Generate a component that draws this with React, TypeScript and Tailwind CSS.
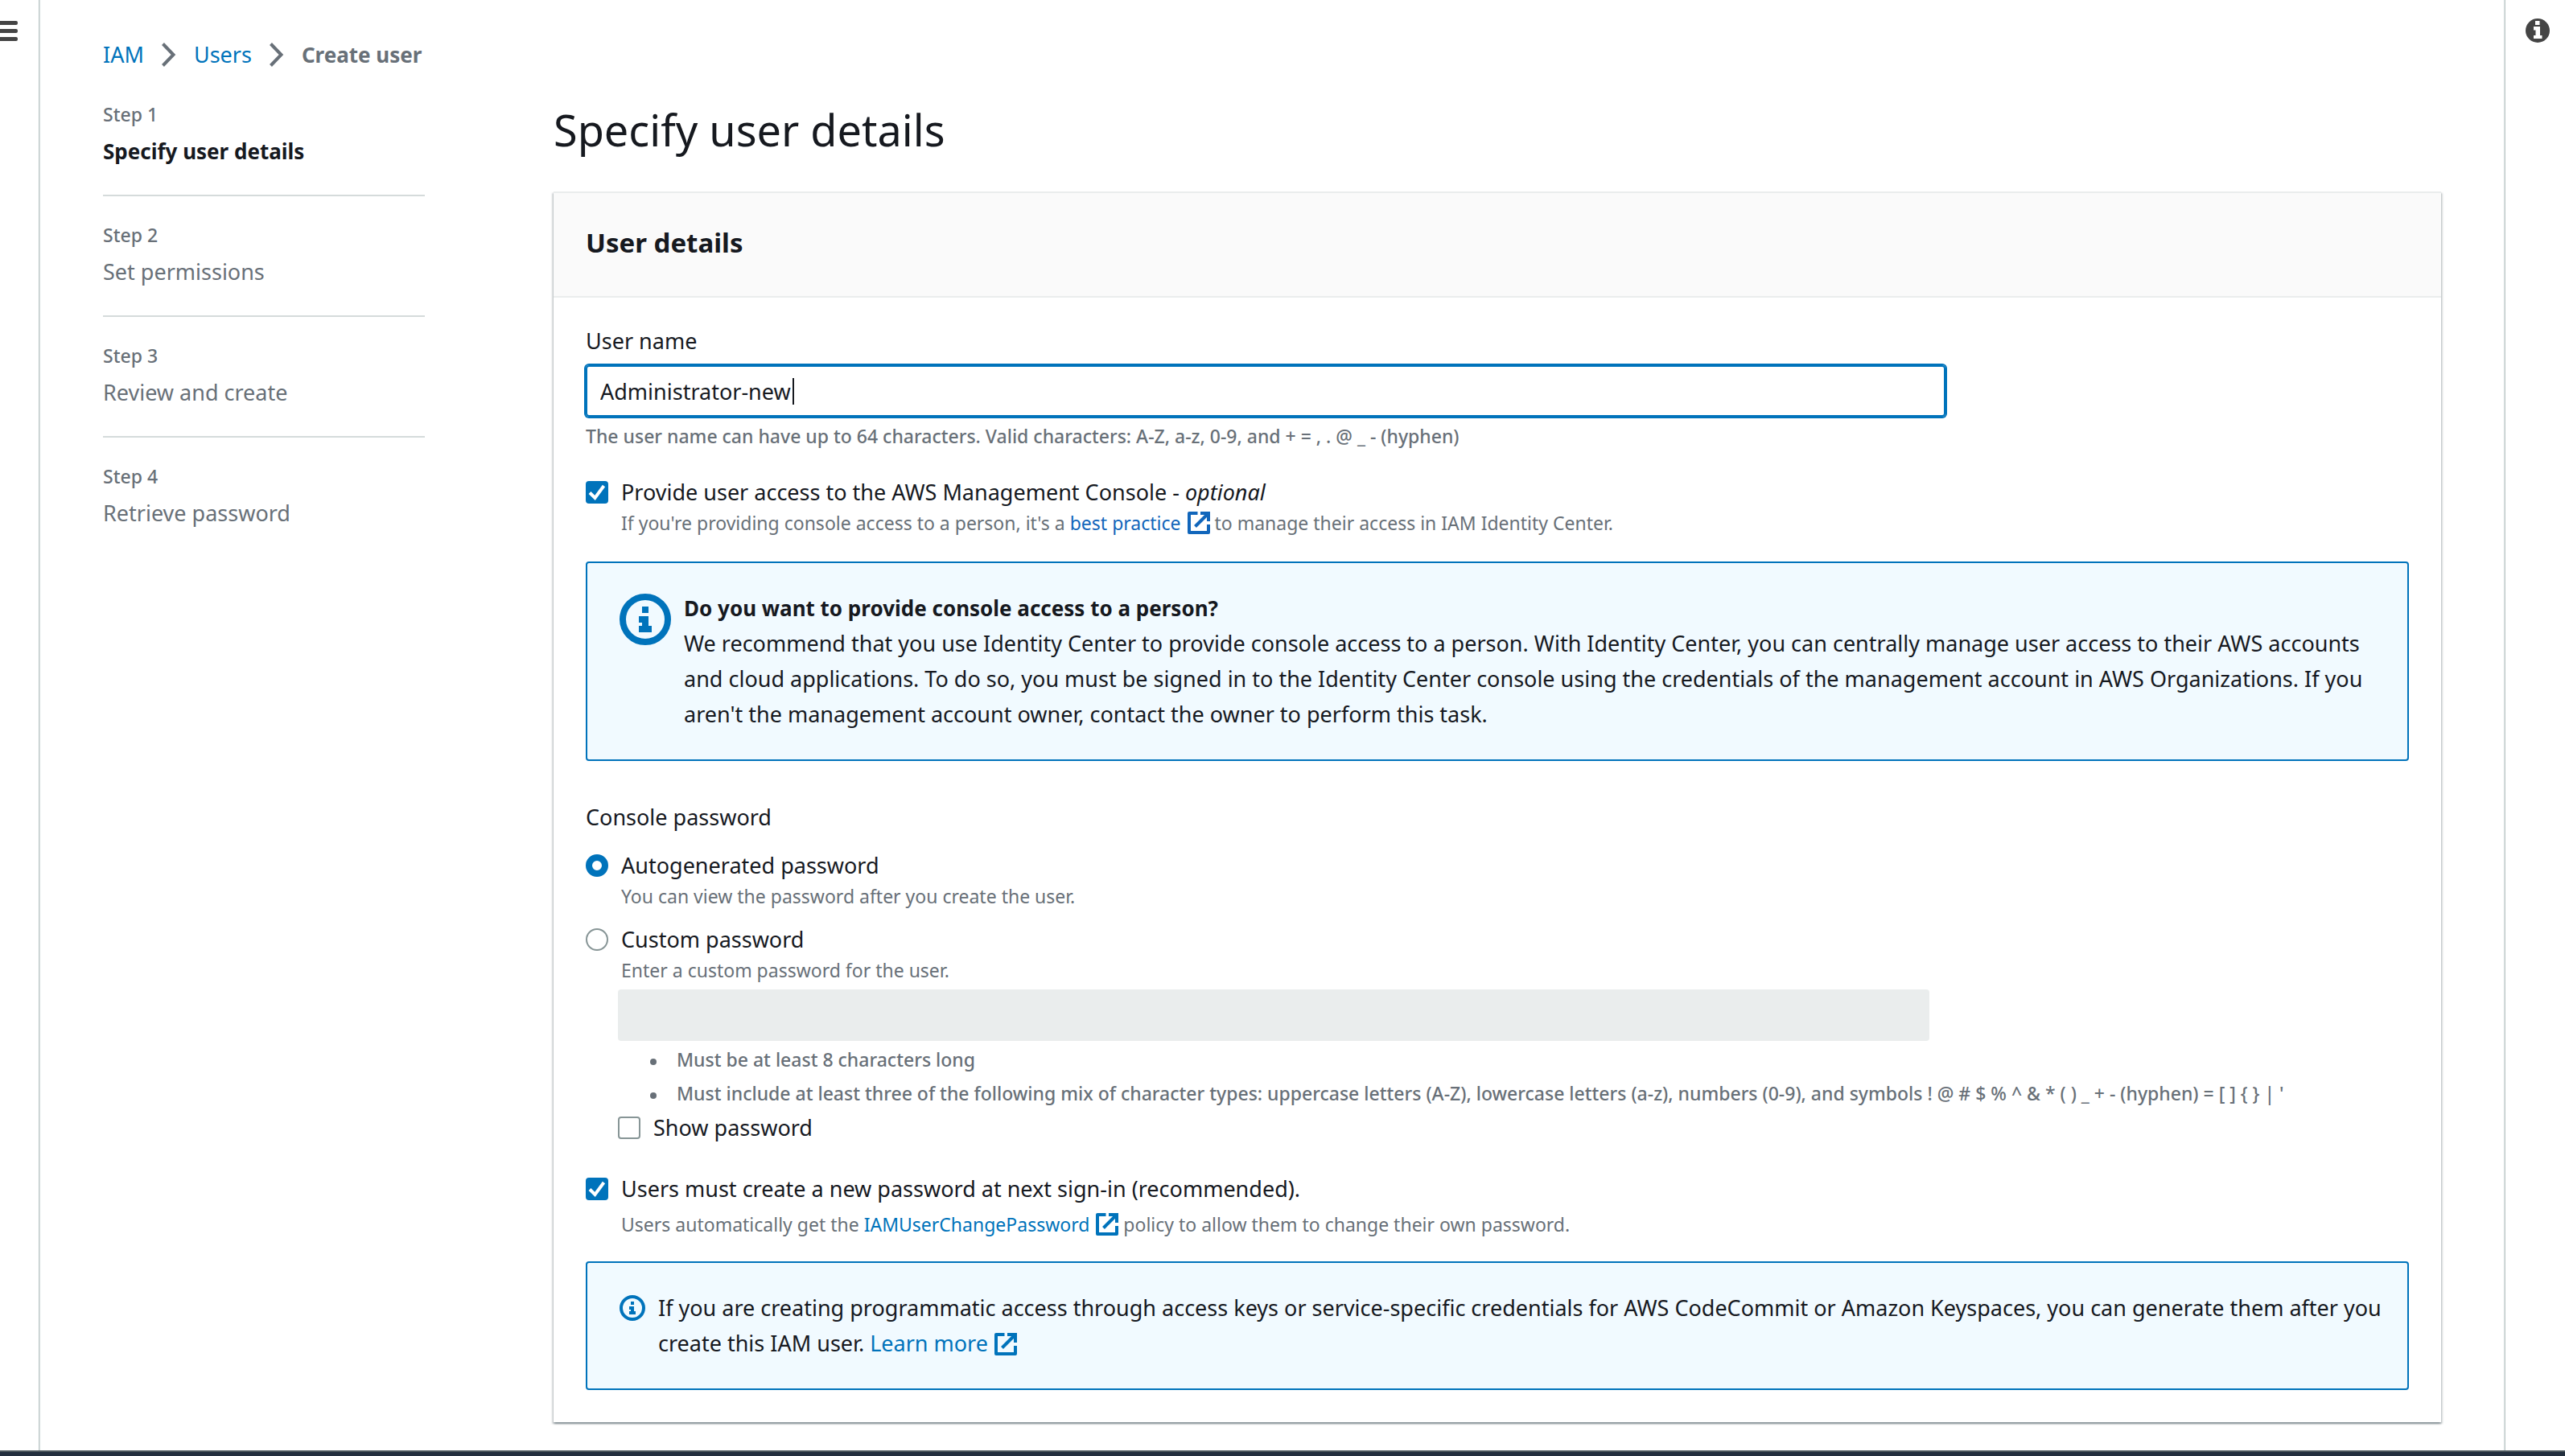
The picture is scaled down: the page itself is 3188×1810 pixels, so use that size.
import type { ReactNode } from 'react';

const steps = [
  { id: 1, title: 'Specify user details', current: true },
  { id: 2, title: 'Set permissions', current: false },
  { id: 3, title: 'Review and create', current: false },
  { id: 4, title: 'Retrieve password', current: false },
];

function Chevron() {
  return (
    <svg className="h-[30px] w-5" viewBox="0 0 20 30" fill="none" stroke="#687078" strokeWidth="4" aria-hidden="true">
      <path d="M2.5 1.5 15.5 15 2.5 28.5" />
    </svg>
  );
}

function ExternalIcon() {
  return (
    <svg className="ml-2 inline-block size-7 align-[-5px]" viewBox="0 0 28 28" fill="none" stroke="currentColor" strokeWidth="4" aria-hidden="true">
      <path d="M12.5 2H2v24h24V16" strokeLinejoin="round" />
      <path d="M16 2h10v10" />
      <path d="M9.5 18.500 25 3" />
    </svg>
  );
}

function ExternalLink({ children, className = 'text-[#0073bb]' }: { children: ReactNode; className?: string }) {
  return (
    <a href="#" className={className}>
      {children}
      <ExternalIcon />
    </a>
  );
}

function InfoIcon({ className }: { className: string }) {
  return (
    <svg className={className} viewBox="0 0 16 16" fill="#0073bb" aria-hidden="true">
      <circle cx="8" cy="8" r="7" fill="none" stroke="#0073bb" strokeWidth="2" />
      <path d="M7 4h2v2H7zM6 7h3v3h1v2H6v-2h1V9H6z" />
    </svg>
  );
}

function Checkbox({ id, checked = false }: { id: string; checked?: boolean }) {
  return (
    <span className="mt-2 grid size-7 shrink-0">
      <input
        id={id}
        type="checkbox"
        defaultChecked={checked}
        className="peer col-start-1 row-start-1 size-7 appearance-none rounded-[4px] border-2 border-[#879596] bg-white checked:border-[#0073bb] checked:bg-[#0073bb]"
      />
      <svg className="pointer-events-none invisible col-start-1 row-start-1 size-7 peer-checked:visible" viewBox="0 0 28 28" fill="none" stroke="#fff" strokeWidth="4" aria-hidden="true">
        <path d="M5 14.500 11.500 21 22.500 6" />
      </svg>
    </span>
  );
}

function Radio({ id, checked = false }: { id: string; checked?: boolean }) {
  return (
    <input
      id={id}
      type="radio"
      name="console-password"
      defaultChecked={checked}
      className="mt-2 size-7 shrink-0 appearance-none rounded-full border-2 border-[#879596] bg-white checked:border-8 checked:border-[#0073bb]"
    />
  );
}

function Hint({ id, children, className = 'leading-8' }: { id?: string; children: ReactNode; className?: string }) {
  return (
    <p id={id} className={`text-[23px] text-[#687078] ${className}`}>
      {children}
    </p>
  );
}

function Alert({ children }: { children: ReactNode }) {
  return (
    <div role="note" className="flex items-start gap-4 rounded-[4px] border-2 border-[#0073bb] bg-[#f1faff] py-[34px] pr-6 pl-10">
      {children}
    </div>
  );
}

export default function App() {
  return (
    <div className="flex min-h-screen flex-col bg-white font-['Noto_Sans',sans-serif] text-[27px] leading-[44px] text-[#16191f]">
      <div className="flex flex-1">
        <aside className="w-[49px] shrink-0 border-r border-[#bcc7c7] pt-[26px] shadow-[1px_0_1px_#dde3e3]">
          <button type="button" aria-label="Open navigation" className="flex flex-col gap-[5px]">
            <span className="h-[5px] w-[22px] rounded-r-xs bg-[#444]" />
            <span className="h-[5px] w-[22px] rounded-r-xs bg-[#444]" />
            <span className="h-[5px] w-[22px] rounded-r-xs bg-[#444]" />
          </button>
        </aside>

        <main className="min-w-0 flex-1 px-[79px] pt-[46px] pb-[35px]">
          <nav aria-label="Breadcrumbs" className="mb-9">
            <ol className="flex items-center gap-[21px]">
              <li><a href="#" className="text-[#0073bb]">IAM</a></li>
              <li aria-hidden="true"><Chevron /></li>
              <li><a href="#" className="text-[#0073bb]">Users</a></li>
              <li aria-hidden="true"><Chevron /></li>
              <li className="text-[26px] font-bold text-[#687078]">Create user</li>
            </ol>
          </nav>

          <div className="flex items-start gap-40">
            <nav aria-label="Steps" className="w-[400px] shrink-0">
              <ol className="divide-y-2 divide-[#d5dbdb]">
                {steps.map((step) => (
                  <li key={step.id} className="py-8 first:pt-0">
                    <p className="mb-2 text-[23px] leading-8 font-medium text-[#687078]">Step {step.id}</p>
                    {step.current ? (
                      <p aria-current="step" className="text-[26px] font-bold">{step.title}</p>
                    ) : (
                      <p className="text-[#687078]">{step.title}</p>
                    )}
                  </li>
                ))}
              </ol>
            </nav>

            <div className="min-w-0 flex-1">
              <h1 className="mb-[42px] text-[54px] leading-[70px]">Specify user details</h1>

              <section className="border-t-2 border-[#eaeded] shadow-[0_2px_2px_rgba(0,28,36,0.3),2px_2px_2px_rgba(0,28,36,0.15),-2px_2px_2px_rgba(0,28,36,0.15)]">
                <header className="border-b-2 border-[#eaeded] bg-[#fafafa] px-10 pt-10 pb-11">
                  <h2 className="text-[33px] font-bold">User details</h2>
                </header>

                <form className="bg-white px-10 pt-8 pb-10">
                  <label htmlFor="user-name" className="block">User name</label>
                  <div className="relative mt-2 mb-2 w-[calc(75%-10px)]">
                    <input
                      id="user-name"
                      type="text"
                      defaultValue="Administrator-new"
                      aria-describedby="user-name-hint"
                      className="block h-16 w-full rounded-[4px] border-2 border-[#0073bb] px-4 ring-2 ring-[#0073bb] outline-none"
                    />
                    <span aria-hidden="true" className="absolute top-4 left-[257px] h-[33px] w-0.5 bg-[#16191f]" />
                  </div>
                  <Hint id="user-name-hint" className="leading-8 font-medium">
                    The user name can have up to 64 characters. Valid characters: A-Z, a-z, 0-9, and + = , . @ _ - (hyphen)
                  </Hint>

                  <div className="mt-8 mb-8 flex gap-4">
                    <Checkbox id="console-access" checked />
                    <div>
                      <label htmlFor="console-access" className="block">
                        Provide user access to the AWS Management Console - <i>optional</i>
                      </label>
                      <Hint>
                        If you're providing console access to a person, it's a{' '}
                        <ExternalLink className="text-[#1166bb]">best practice</ExternalLink> to manage their access in IAM Identity Center.
                      </Hint>
                    </div>
                  </div>

                  <Alert>
                    <InfoIcon className="mt-1 size-16 shrink-0" />
                    <div>
                      <p className="text-[26px] font-bold">Do you want to provide console access to a person?</p>
                      <p>
                        We recommend that you use Identity Center to provide console access to a person. With Identity Center, you can
                        centrally manage user access to their AWS accounts and cloud applications. To do so, you must be signed in to the
                        Identity Center console using the credentials of the management account in AWS Organizations. If you aren't the
                        management account owner, contact the owner to perform this task.
                      </p>
                    </div>
                  </Alert>

                  <div role="radiogroup" aria-labelledby="console-password-label" className="mt-12">
                    <p id="console-password-label">Console password</p>
                    <div className="mt-4 flex gap-4">
                      <Radio id="autogenerated" checked />
                      <div>
                        <label htmlFor="autogenerated" className="block">Autogenerated password</label>
                        <Hint>You can view the password after you create the user.</Hint>
                      </div>
                    </div>
                    <div className="mt-4 flex gap-4">
                      <Radio id="custom" />
                      <div>
                        <label htmlFor="custom" className="block">Custom password</label>
                        <Hint>Enter a custom password for the user.</Hint>
                      </div>
                    </div>
                  </div>

                  <div className="mt-2 px-10">
                    <input
                      type="password"
                      aria-label="Custom password"
                      disabled
                      className="block h-16 w-[calc(75%-10px)] rounded-[4px] bg-[#eaeded]"
                    />
                    <ul className="mt-0.5 text-[23px] leading-[42px] font-medium text-[#687078]">
                      {[
                        'Must be at least 8 characters long',
                        "Must include at least three of the following mix of character types: uppercase letters (A-Z), lowercase letters (a-z), numbers (0-9), and symbols ! @ # $ % ^ & * ( ) _ + - (hyphen) = [ ] { } | '",
                      ].map((rule) => (
                        <li key={rule} className="flex items-center gap-[25px] pl-10">
                          <span className="mt-1.5 size-2 shrink-0 rounded-full bg-[#687078]" />
                          {rule}
                        </li>
                      ))}
                    </ul>
                    <div className="flex gap-4">
                      <Checkbox id="show-password" />
                      <label htmlFor="show-password">Show password</label>
                    </div>
                  </div>

                  <div className="mt-8 mb-6 flex gap-4">
                    <Checkbox id="must-change" checked />
                    <div>
                      <label htmlFor="must-change" className="block">
                        Users must create a new password at next sign-in (recommended).
                      </label>
                      <Hint className="leading-[44px]">
                        Users automatically get the <ExternalLink>IAMUserChangePassword</ExternalLink> policy to allow them to change their
                        own password.
                      </Hint>
                    </div>
                  </div>

                  <Alert>
                    <InfoIcon className="mt-1.5 size-8 shrink-0" />
                    <p>
                      If you are creating programmatic access through access keys or service-specific credentials for AWS CodeCommit or
                      Amazon Keyspaces, you can generate them after you create this IAM user. <ExternalLink>Learn more</ExternalLink>
                    </p>
                  </Alert>
                </form>
              </section>
            </div>
          </div>
        </main>

        <aside className="w-[75px] shrink-0 border-l border-[#bcc7c7] pt-[23px] pl-[25px] shadow-[-1px_0_1px_#dde3e3]">
          <button type="button" aria-label="Open help panel" className="block">
            <svg className="size-[30px]" viewBox="0 0 30 30" aria-hidden="true">
              <circle cx="15" cy="15" r="15" fill="#444" />
              <path d="M12 3h5.500v5H12zM10 10h8v11h2.500v4H10v-4h2.500v-6.500H10z" fill="#fff" />
            </svg>
          </button>
        </aside>
      </div>
      <footer className="h-[7px] border-t-2 border-[#4c575c] bg-[#232f3e]" />
    </div>
  );
}
